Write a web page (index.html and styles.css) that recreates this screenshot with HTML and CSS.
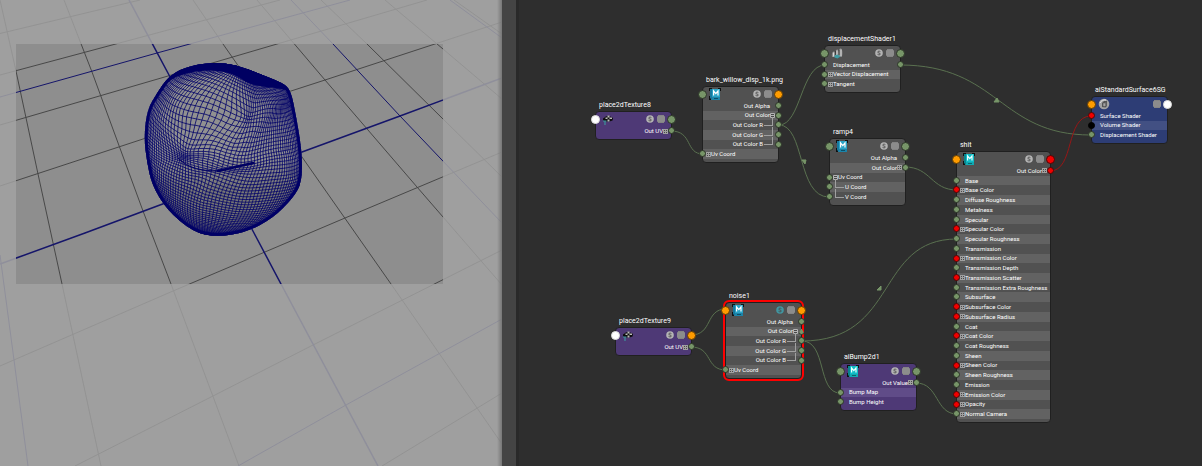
FILE: index.html
```html
<!DOCTYPE html>
<html lang="en">
<head>
<meta charset="utf-8">
<title>Node Editor</title>
<link rel="stylesheet" href="styles.css">
</head>
<body>
<svg class="symbols" aria-hidden="true">
  <defs>
    <symbol id="plus" viewBox="0 0 5 5"><path d="M0 0h5v5H0z" fill="#a0a0a0"/><path d="M1 1h1v1H1zM3 1h1v1H3zM1 3h1v1H1zM3 3h1v1H3z" fill="#4a4a4a"/></symbol>
    <symbol id="minus" viewBox="0 0 5 5"><path d="M.5.5h4v4h-4z" fill="#484848" stroke="#b4b4b4"/><path d="M1 2h3v1H1z" fill="#b4b4b4"/></symbol>
    <symbol id="solo" viewBox="0 0 8 8"><circle cx="4" cy="4" r="3.8" fill="currentColor"/><path d="M5.4 2.6C4.8 2 2.7 1.9 2.7 3.1S5.4 3.8 5.4 5 3 6 2.5 5.3" fill="none" stroke="#4b4b4b" stroke-width=".9"/></symbol>
    <symbol id="list" viewBox="0 0 8 8"><path d="M1 .5h6M1 7.5h6" stroke="#848484"/><rect x="0" y="1" width="8" height="6" rx="1" fill="#8c8c8c"/></symbol>
    <symbol id="maya" viewBox="0 0 12 12"><path d="M0 0h3v3H0zM9 0h3v3H9zM0 8h2v4H0z" fill="#111"/><path d="M1 1h10v11H2.500z" fill="#2ba3c6"/><path d="M1 1h2v11l-2-2z" fill="#17789d"/><path d="M3 9h8v3H3z" fill="#1b84a9"/><path d="M5 10.500h4" stroke="#0b4f68"/><path d="M4.600 7.500V3l2.200 2.600L9 3v4.500" fill="none" stroke="#fff" stroke-width="1.200"/></symbol>
    <symbol id="arnold" viewBox="0 0 12 12"><path d="M0 0h3v3H0zM9 0h3v3H9zM0 8h2v4H0z" fill="#111"/><path d="M1 1h10v11H2.500z" fill="#10bcc6"/><path d="M1 1h2v11l-2-2z" fill="#08848c"/><path d="M3 9h8v3H3z" fill="#10a9b2"/><path d="M5 10.500h4" stroke="#08666c"/><path d="M4.600 7.500V3l2.200 2.600L9 3v4.500" fill="none" stroke="#e8ffff" stroke-width="1.200"/></symbol>
    <symbol id="place" viewBox="0 0 12 12"><path d="M1 5.500 4 3.500 6.500 2.500 11 5 10.500 7.500 7.500 8.500H4L1 7.500z" fill="#0c0c0c"/><path d="M5.500 2.500h2v2h-2zM3.500 4.500h2v1.500h-2zM7.500 4.500H10V6H7.500zM5.500 6.500h2v2h-2z" fill="#bbb"/><path d="M1 8h3.500M3 8v4" stroke="#3e929b" stroke-width="1.200"/></symbol>
    <symbol id="displace" viewBox="0 0 12 12"><path d="M1 10C.5 6 1.500 4.500 3 4.500c1 0 1.200 2 1.500 3C5 4 5 2.500 6.300 2.500S7.500 4 7.700 5.500C8 2.500 8.500 1 10 1.500c1.700.8 1.700 6 .8 8.500z" fill="#8d8d8d"/><path d="M2.500 5.500v4M6 3.500V8M10 2.500V9" stroke="#d8d8d8"/><path d="M4.500 4v4M8 3v5" stroke="#333" stroke-width=".8"/><path d="M3.500 8.500 6.500 7.500l3 2-3 2-3-1z" fill="#3e9aa2"/></symbol>
    <symbol id="group" viewBox="0 0 12 12"><circle cx="6" cy="6" r="5.300" fill="#a3a3a3"/><path d="M4 9V5l2-2h3v5L7.500 9.500z" fill="#555"/><path d="M5.500 5.500H7V8H5.500zM7.800 4.500v3.500" fill="#aaa" stroke="#999" stroke-width=".5"/><path d="M2 5C3 2.500 5.500 1.500 8 2" stroke="#e6e6e6" fill="none"/></symbol>
  </defs>
</svg>

<main class="workspace">
  <section class="viewport" aria-label="Perspective view">
    <svg class="scene" viewBox="0 0 502 466" preserveAspectRatio="xMinYMin slice">
      <defs>
        <clipPath id="gate"><path d="M16 44h427v240H16z"/></clipPath>
        <linearGradient id="body" x1="0" y1="0" x2="0" y2="1"><stop offset="0" stop-color="#8e8e8e"/><stop offset=".55" stop-color="#929292"/><stop offset=".72" stop-color="#777"/><stop offset="1" stop-color="#6f6f6f"/></linearGradient>
        <g id="grid">
          <path class="minor" d="M0 33.500 140 0M0 75 280 0M0 125 168 76 427 0M0 186 143 139 325 80 502 22M0 366 173 291 345 218 502 152M75 466 213 396 313 345 502 250M382 466 502 393"/>
          <path class="minor" d="M0 0 16 71 38 174 62 284 101 466M64 0 92 72 143 211 171 284 239 466M193 0 223 44 302 157 391 284 502 444M257 0 325 80 417 187 502 285M321 0 367 44 443 119 502 177M385 0 443 49 502 99M454 0 502 34"/>
          <path class="axis" d="M0 97 157 53 350 0M238 466 346 405 502 319M0 255 14 360 28 466M291 0 333 44 400 116 502 223M450 0 502 38"/>
          <path class="axis major" d="M0 264 85 233 302 152 400 116 502 78M129 0 169 75 254 233 281 284 378 466"/>
        </g>
      </defs>
      <use href="#grid" class="outside"/>
      <g clip-path="url(#gate)">
        <path d="M16 44h427v240H16z" fill="#8e8e8e"/>
        <use href="#grid" class="inside"/>
        <g id="mesh"></g>
      </g>
    </svg>
  </section>
  <div class="splitter"></div>
  <section class="graph" aria-label="Node graph">
    <svg class="wires" aria-hidden="true">
      <path d="M152 131C174 131 166 154 184 154M260 125C282 125 282 65 306 65M260 125C286 125 278 197 310 197M381 65C480 65 480 135 572 135M386 167C412 167 412 190 438 190M172 335C194 335 186 309 207 309M172 347C194 347 186 370 207 370M283 341C380 341 356 239 438 239M283 341C308 341 298 393 321 393M397 383C420 383 416 414 438 414"/>
      <path class="hot" d="M531 171C556 171 546 116 572 116"/>
      <path class="arrow" d="M283 160h4l-1 4zM475 102l3-4 2 4zM358 290l4-4v4z"/>
    </svg>

    <article class="node purple place-8">
      <h2>place2dTexture8</h2>
      <header><i class="dot in white"></i><svg class="kind"><use href="#place"/></svg><button aria-label="Solo"><svg><use href="#solo"/></svg></button><button aria-label="View"><svg><use href="#list"/></svg></button><i class="dot out"></i></header>
      <ul class="n1"><li class="right">Out UV<button class="tree" aria-label="Expand"><svg><use href="#plus"/></svg></button><i class="port out"></i></li></ul>
    </article>

    <article class="node bark">
      <h2>bark_willow_disp_1k.png</h2>
      <header><i class="dot in"></i><svg class="kind"><use href="#maya"/></svg><button aria-label="Solo"><svg><use href="#solo"/></svg></button><button aria-label="View"><svg><use href="#list"/></svg></button><i class="dot out orange"></i></header>
      <ul class="n6">
        <li class="right">Out Alpha<span class="tree"></span><i class="port out"></i></li>
        <li class="right">Out Color<button class="tree" aria-label="Collapse"><svg><use href="#minus"/></svg></button><i class="port out"></i></li>
        <li class="right child">Out Color R<i class="port out"></i></li>
        <li class="right child">Out Color G<i class="port out"></i></li>
        <li class="right child">Out Color B<i class="port out"></i></li>
        <li><i class="port in"></i><button class="tree" aria-label="Expand"><svg><use href="#plus"/></svg></button>Uv Coord</li>
      </ul>
    </article>

    <article class="node displacement">
      <h2>displacementShader1</h2>
      <header><i class="dot in"></i><svg class="kind"><use href="#displace"/></svg><button aria-label="Solo"><svg><use href="#solo"/></svg></button><button aria-label="View"><svg><use href="#list"/></svg></button><i class="dot out"></i></header>
      <ul class="n3">
        <li><i class="port in"></i><span class="tree"></span>Displacement<i class="port out"></i></li>
        <li><i class="port in"></i><button class="tree" aria-label="Expand"><svg><use href="#plus"/></svg></button>Vector Displacement</li>
        <li><i class="port in"></i><button class="tree" aria-label="Expand"><svg><use href="#plus"/></svg></button>Tangent</li>
      </ul>
    </article>

    <article class="node ramp">
      <h2>ramp4</h2>
      <header><i class="dot in"></i><svg class="kind"><use href="#maya"/></svg><button aria-label="Solo"><svg><use href="#solo"/></svg></button><button aria-label="View"><svg><use href="#list"/></svg></button><i class="dot out"></i></header>
      <ul class="n5">
        <li class="right">Out Alpha<span class="tree"></span><i class="port out"></i></li>
        <li class="right">Out Color<button class="tree" aria-label="Expand"><svg><use href="#plus"/></svg></button><i class="port out"></i></li>
        <li><i class="port in"></i><button class="tree" aria-label="Collapse"><svg><use href="#minus"/></svg></button>Uv Coord</li>
        <li class="child"><i class="port in"></i>U Coord</li>
        <li class="child"><i class="port in"></i>V Coord</li>
      </ul>
    </article>

    <article class="node blue surface-group">
      <h2>aiStandardSurface6SG</h2>
      <header><i class="dot in orange"></i><svg class="kind"><use href="#group"/></svg><button aria-label="View"><svg><use href="#list"/></svg></button><i class="dot out white"></i></header>
      <ul class="n3">
        <li><i class="port in red"></i><span class="tree"></span>Surface Shader</li>
        <li><i class="port in black"></i><span class="tree"></span>Volume Shader</li>
        <li><i class="port in"></i><span class="tree"></span>Displacement Shader</li>
      </ul>
    </article>

    <article class="node surface">
      <h2>shit</h2>
      <header><i class="dot in orange"></i><svg class="kind"><use href="#arnold"/></svg><button aria-label="Solo"><svg><use href="#solo"/></svg></button><button aria-label="View"><svg><use href="#list"/></svg></button><i class="dot out red"></i></header>
      <ul class="n26">
        <li class="right">Out Color<button class="tree" aria-label="Expand"><svg><use href="#plus"/></svg></button><i class="port out red"></i></li>
        <li><i class="port in"></i><span class="tree"></span>Base</li>
        <li><i class="port in red"></i><button class="tree" aria-label="Expand"><svg><use href="#plus"/></svg></button>Base Color</li>
        <li><i class="port in"></i><span class="tree"></span>Diffuse Roughness</li>
        <li><i class="port in"></i><span class="tree"></span>Metalness</li>
        <li><i class="port in"></i><span class="tree"></span>Specular</li>
        <li><i class="port in red"></i><button class="tree" aria-label="Expand"><svg><use href="#plus"/></svg></button>Specular Color</li>
        <li><i class="port in"></i><span class="tree"></span>Specular Roughness</li>
        <li><i class="port in"></i><span class="tree"></span>Transmission</li>
        <li><i class="port in red"></i><button class="tree" aria-label="Expand"><svg><use href="#plus"/></svg></button>Transmission Color</li>
        <li><i class="port in"></i><span class="tree"></span>Transmission Depth</li>
        <li><i class="port in red"></i><button class="tree" aria-label="Expand"><svg><use href="#plus"/></svg></button>Transmission Scatter</li>
        <li><i class="port in"></i><span class="tree"></span>Transmission Extra Roughness</li>
        <li><i class="port in"></i><span class="tree"></span>Subsurface</li>
        <li><i class="port in red"></i><button class="tree" aria-label="Expand"><svg><use href="#plus"/></svg></button>Subsurface Color</li>
        <li><i class="port in red"></i><button class="tree" aria-label="Expand"><svg><use href="#plus"/></svg></button>Subsurface Radius</li>
        <li><i class="port in"></i><span class="tree"></span>Coat</li>
        <li><i class="port in red"></i><button class="tree" aria-label="Expand"><svg><use href="#plus"/></svg></button>Coat Color</li>
        <li><i class="port in"></i><span class="tree"></span>Coat Roughness</li>
        <li><i class="port in"></i><span class="tree"></span>Sheen</li>
        <li><i class="port in red"></i><button class="tree" aria-label="Expand"><svg><use href="#plus"/></svg></button>Sheen Color</li>
        <li><i class="port in"></i><span class="tree"></span>Sheen Roughness</li>
        <li><i class="port in"></i><span class="tree"></span>Emission</li>
        <li><i class="port in red"></i><button class="tree" aria-label="Expand"><svg><use href="#plus"/></svg></button>Emission Color</li>
        <li><i class="port in red"></i><button class="tree" aria-label="Expand"><svg><use href="#plus"/></svg></button>Opacity</li>
        <li><i class="port in"></i><button class="tree" aria-label="Expand"><svg><use href="#plus"/></svg></button>Normal Camera</li>
      </ul>
    </article>

    <article class="node purple place-9">
      <h2>place2dTexture9</h2>
      <header><i class="dot in white"></i><svg class="kind"><use href="#place"/></svg><button aria-label="Solo"><svg><use href="#solo"/></svg></button><button aria-label="View"><svg><use href="#list"/></svg></button><i class="dot out orange"></i></header>
      <ul class="n1"><li class="right">Out UV<button class="tree" aria-label="Expand"><svg><use href="#plus"/></svg></button><i class="port out"></i></li></ul>
    </article>

    <article class="node noise selected">
      <h2>noise1</h2>
      <header><i class="dot in orange"></i><svg class="kind"><use href="#maya"/></svg><button class="on" aria-label="Solo"><svg><use href="#solo"/></svg></button><button aria-label="View"><svg><use href="#list"/></svg></button><i class="dot out orange"></i></header>
      <ul class="n6">
        <li class="right">Out Alpha<span class="tree"></span><i class="port out"></i></li>
        <li class="right">Out Color<button class="tree" aria-label="Collapse"><svg><use href="#minus"/></svg></button><i class="port out cone"></i></li>
        <li class="right child">Out Color R<i class="port out"></i></li>
        <li class="right child">Out Color G<i class="port out"></i></li>
        <li class="right child">Out Color B<i class="port out"></i></li>
        <li><i class="port in"></i><button class="tree" aria-label="Expand"><svg><use href="#plus"/></svg></button>Uv Coord</li>
      </ul>
    </article>

    <article class="node purple bump">
      <h2>aiBump2d1</h2>
      <header><i class="dot in"></i><svg class="kind"><use href="#arnold"/></svg><button aria-label="Solo"><svg><use href="#solo"/></svg></button><button aria-label="View"><svg><use href="#list"/></svg></button><i class="dot out"></i></header>
      <ul class="n3">
        <li class="right">Out Value<button class="tree" aria-label="Expand"><svg><use href="#plus"/></svg></button><i class="port out"></i></li>
        <li><i class="port in"></i><span class="tree"></span>Bump Map</li>
        <li><i class="port in"></i><span class="tree"></span>Bump Height</li>
      </ul>
    </article>
  </section>
</main>
<script src="mesh.js"></script>
</body>
</html>
```
FILE: styles.css
```css
* { box-sizing: border-box; }
body { margin: 0; background: #2e2e2e; color: #fff; font: 6px/8px Roboto, "Noto Sans", sans-serif; }
button { appearance: none; border: 0; padding: 0; margin: 0; background: none; color: #b4b4b4; display: block; }
svg { display: block; }
.symbols { position: absolute; width: 0; height: 0; }

.workspace { display: flex; min-height: 100vh; }
.viewport { flex: 502 1 0; position: relative; background: #9f9f9f; overflow: hidden; }
.viewport::after { content: ""; position: absolute; inset: 0 0 0 auto; width: 5px; background: linear-gradient(90deg, transparent, #777); }
.scene { position: absolute; width: 100%; height: 100%; }
.splitter { flex: none; width: 17px; background: #444; border-right: 3px solid #292929; }
.graph { flex: 683 1 0; position: relative; background: #2e2e2e; overflow: hidden; }

.minor, .axis { fill: none; stroke-width: 1; }
.outside { --minor: #939393; --axis: #8f8f9b; }
.inside { --minor: #484848; --axis: #15156a; }
.minor { stroke: var(--minor); }
.axis { stroke: var(--axis); }
.major { stroke-width: 1.5; }
.body-fill { fill: url(#body); }
.net { fill: none; stroke: #000068; stroke-width: .8; }
.rim { fill: none; stroke: #000066; stroke-width: 6; stroke-linejoin: round; }
.fold { fill: #000062; }
.seam { fill: none; stroke: #000062; stroke-linecap: round; }

.wires { position: absolute; width: 100%; height: 100%; }
.wires path { fill: none; stroke: #5a7150; stroke-width: 1; }
.wires .hot { stroke: #971616; }
.wires .arrow { fill: #779568; stroke: #779568; }

.node { position: absolute; width: 77px; padding-bottom: 3px; border: 1px solid #202020; border-radius: 4px; background: #515151; --band: #626262; }
.node.purple { background: #4e3976; --band: #604c88; }
.node.blue { background: #2d3d75; --band: #425083; }
.node.selected { outline: 2px solid #ff0000; }
.node h2 { position: absolute; left: 3px; top: -11px; margin: 0; font-size: 7px; line-height: 9px; font-weight: 400; white-space: nowrap; }
.node header { position: relative; display: flex; align-items: center; gap: 3px; height: 14px; padding: 0 6px; }
.node header svg { width: 8px; height: 8px; }
.node header .kind { width: 12px; height: 12px; margin-right: auto; }
.node header .on { color: #4196a1; }
.node ul { display: grid; grid-template-columns: minmax(0, 1fr); grid-auto-rows: 1fr; margin: 0; padding: 0; list-style: none; }
.n1 { height: 10px; }
.n3 { height: 29px; }
.n5 { height: 49px; }
.n6 { height: 58px; }
.n26 { height: 253px; }
.node li { position: relative; display: flex; align-items: center; padding: 0 3px; white-space: nowrap; }
.node li:nth-child(even) { background: var(--band); }
.node li.right { justify-content: flex-end; }
.tree, .tree svg { flex: none; width: 5px; height: 5px; }
.node li.child { padding: 0 15px; }
.child::before { content: ""; position: absolute; left: 5px; top: -3px; bottom: 4px; width: 8px; border: solid #a0a0a0; border-width: 0 0 1px 1px; }
.child.right::before { left: auto; right: 5px; border-width: 0 1px 1px 0; }

.dot, .port { position: absolute; border-radius: 50%; background: #779568; border: 1px solid #2b3327; }
.dot { width: 9px; height: 9px; top: 3px; }
.dot.in { left: -5px; }
.dot.out { right: -5px; }
.port { width: 7px; height: 7px; top: 1px; }
.port.in { left: -4px; }
.port.out { right: -4px; }
.white { background: #fff; border-color: #ddd; }
.orange { background: #ff9c00; border-color: #5d3c08; }
.red { background: #f00000; border-color: #4a0808; }
.black { background: #000; border-color: #000; }
.port.cone { clip-path: polygon(50% 10%, 100% 100%, 0 100%); }

.place-8 { left: 76px; top: 111px; }
.bark { left: 183px; top: 86px; }
.displacement { left: 305px; top: 45px; }
.ramp { left: 310px; top: 138px; }
.surface-group { left: 572px; top: 96px; }
.surface { left: 437px; top: 151px; width: 95px; }
.place-9 { left: 96px; top: 327px; }
.noise { left: 206px; top: 302px; }
.bump { left: 321px; top: 363px; }
```
FILE: mesh.js
```js
// Wireframe of a displaced sphere, drawn into the scene.
const outline = [[144,138],[147,110],[157,93],[168,77],[185,67],[212,62],[237,65],[257,73],[283,83],[290,90],[294,105],[302,150],[302,182],[293,198],[273,218],[247,232],[217,237],[193,232],[167,210],[152,185],[147,162]];
const cx = 223, cy = 150;
const polar = outline
  .map(([x, y]) => [Math.atan2(y - cy, x - cx), Math.hypot(x - cx, y - cy)])
  .sort((a, b) => a[0] - b[0]);

function radiusAt(angle) {
  const n = polar.length;
  for (let i = 0; i < n; i++) {
    const a = polar[i], b = polar[(i + 1) % n];
    const end = i === n - 1 ? b[0] + 2 * Math.PI : b[0];
    const t = angle < polar[0][0] ? angle + 2 * Math.PI : angle;
    if (t >= a[0] && t <= end) return a[1] + (b[1] - a[1]) * (t - a[0]) / (end - a[0]);
  }
  return polar[0][1];
}

const bell = (x, y, px, py, sx, sy) => Math.exp(-(((x - px) / sx) ** 2) - (((y - py) / sy) ** 2));

function project(lon, lat) {
  const tilt = 0.3, roll = -0.2;
  const x = Math.cos(lat) * Math.sin(lon);
  const y = Math.sin(lat);
  const z = Math.cos(lat) * Math.cos(lon);
  const y2 = y * Math.cos(tilt) - z * Math.sin(tilt);
  const z2 = y * Math.sin(tilt) + z * Math.cos(tilt);
  if (z2 < 0) return null;
  const u = x * Math.cos(roll) - y2 * Math.sin(roll);
  const v = x * Math.sin(roll) + y2 * Math.cos(roll);
  const angle = Math.atan2(-v, u);
  const r = Math.hypot(u, v) * radiusAt(angle);
  let px = cx + r * Math.cos(angle), py = cy + r * Math.sin(angle);
  // upper bulge, side dents and the crease across the middle
  const bulge = bell(px, py, 212, 112, 40, 34) * 0.7;
  px += (px - 212) * bulge;
  py += (py - 112) * bulge;
  const dent = bell(px, py, 246, 117, 14, 14) * 0.5;
  px -= (px - 246) * dent;
  py -= (py - 117) * dent;
  const left = bell(px, py, 186, 156, 20, 16) * 0.5;
  px -= (px - 186) * left;
  py -= (py - 156) * left;
  const fold = 170 - (px - 225) * 0.16;
  py -= (py - fold) * 0.5 * bell(px, py, 228, fold, 38, 10);
  const inner = bell(px, py, 223, 150, 60, 60);
  px += Math.sin(py / 9 + px / 30) * 2.4 * inner;
  py += Math.sin(px / 12) * 3 * inner;
  return [px, py];
}

function trace(sample, from, to, steps) {
  let d = "", pen = false;
  for (let i = 0; i <= steps; i++) {
    const p = sample(from + (to - from) * i / steps);
    if (p) d += (pen ? "L" : "M") + p[0].toFixed(1) + " " + p[1].toFixed(1);
    pen = !!p;
  }
  return d;
}

let net = "";
const meridians = 136, parallels = 80;
for (let i = 0; i < meridians; i++) {
  const lon = i / meridians * 2 * Math.PI;
  net += trace(lat => project(lon, lat), -1.5, 1.5, 90);
}
// rows are packed closer together toward the lower half
for (let j = 1; j < parallels; j++) {
  const t = j / parallels;
  const lat = -Math.PI / 2 + Math.PI * (0.68 * t + 0.32 * t * t);
  net += trace(lon => project(lon, lat), -Math.PI, Math.PI, 140);
}

const mid = (a, b) => [(a[0] + b[0]) / 2, (a[1] + b[1]) / 2];
let edge = "";
outline.forEach((p, i) => {
  const m = mid(p, outline[(i + 1) % outline.length]);
  edge += i ? `Q${p} ${m}` : `M${m}`;
});
edge += `Q${outline[0]} ${mid(outline[0], outline[1])}Z`;

document.getElementById("mesh").innerHTML = `
  <clipPath id="shape"><path d="${edge}"/></clipPath>
  <path class="body-fill" d="${edge}"/>
  <g clip-path="url(#shape)">
    <path class="net" d="${net}"/>
    <path class="rim" d="${edge}"/>
    <path class="fold" d="M160 84 190 60 237 58 296 80 292 92C278 86 262 89 246 82 231 70 205 66 176 77 166 82 160 90 155 98z"/>
    <path class="seam" stroke-width="1" d="M178 158C188 169 204 171 218 171"/>
    <path class="seam" stroke-width="2.500" d="M218 171 253 163"/>
  </g>`;
```
